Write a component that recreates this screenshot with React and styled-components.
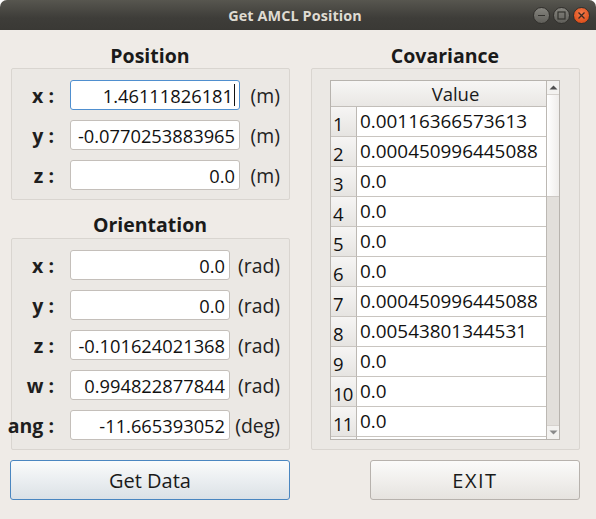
import React from 'react';
import styled, { createGlobalStyle } from 'styled-components';

const GlobalStyle = createGlobalStyle`
  html, body {
    margin: 0;
    padding: 0;
    background: #ffffff;
  }
  body {
    font-family: 'Open Sans', 'Noto Sans', sans-serif;
  }
`;

const Window = styled.div`
  width: 596px;
  height: 519px;
  display: flex;
  flex-direction: column;
  background: #efebe7;
  border-radius: 7px 7px 0 0;
  overflow: hidden;
`;

const TitleBar = styled.div`
  height: 30px;
  display: grid;
  grid-template-columns: 1fr auto 1fr;
  align-items: center;
  padding-right: 6px;
  background: linear-gradient(#57564f, #3e3d39 60%, #3a3935);
`;

const Title = styled.div`
  grid-column: 2;
  color: #dfdbd2;
  font-weight: 700;
  font-size: 14.4px;
  letter-spacing: 0.1px;
`;

const Controls = styled.div`
  justify-self: end;
  display: flex;
  gap: 3px;
`;

const WinButton = styled.div`
  width: 17px;
  height: 17px;
  border-radius: 50%;
  display: flex;
  align-items: center;
  justify-content: center;
  box-sizing: border-box;
  border: 1px solid #32312d;
  background: ${(p) =>
    p.$close
      ? 'radial-gradient(circle at 50% 35%, #f47b4c, #e0531f 70%)'
      : 'linear-gradient(#85847e, #5f5e59)'};
`;

const Body = styled.div`
  display: grid;
  grid-template-columns: 280px 270px;
  column-gap: 20px;
  padding-left: 10px;
`;

const Column = styled.div`
  display: flex;
  flex-direction: column;
`;

const Heading = styled.div`
  height: 38px;
  box-sizing: border-box;
  padding-top: ${(p) => p.$top || 12}px;
  text-align: center;
  font-weight: 700;
  font-size: 19.5px;
  line-height: 25px;
  color: #1a1a1a;
`;

const GroupBox = styled.div`
  margin-left: 1px;
  height: ${(p) => p.$height}px;
  box-sizing: border-box;
  border: 1px solid #d9d5d0;
  border-radius: 2px;
  background: #ebe8e4;
  padding: 11px 9px 9px 0;
  display: flex;
  flex-direction: column;
  gap: 10px;
`;

const FormRow = styled.div`
  display: flex;
  align-items: center;
  height: 30px;
`;

const Label = styled.div`
  width: 42px;
  flex-shrink: 0;
  display: flex;
  justify-content: flex-end;
  white-space: nowrap;
  font-weight: 700;
  font-size: 19.5px;
  color: #1e1e1e;
`;

const Field = styled.div`
  width: ${(p) => p.$width}px;
  height: 30px;
  margin-left: 16px;
  box-sizing: border-box;
  display: flex;
  align-items: center;
  justify-content: flex-end;
  padding-right: 4px;
  background: #ffffff;
  border: 1px solid ${(p) => (p.$focused ? '#4f8fcf' : '#c4bfba')};
  border-radius: 3px;
  font-size: 18.3px;
  color: #111111;
  white-space: nowrap;
  overflow: hidden;
`;

const Caret = styled.span`
  width: 1px;
  height: 22px;
  margin-left: 1px;
  background: #111111;
`;

const Unit = styled.div`
  flex: 1;
  text-align: right;
  font-size: 19.4px;
  color: #222222;
  white-space: nowrap;
`;

const CovBox = styled(GroupBox)`
  padding: 11px 0 9px 18px;
  display: block;
`;

const Table = styled.div`
  width: 230px;
  height: 360px;
  box-sizing: border-box;
  border: 1px solid #b7b3ae;
  display: flex;
  overflow: hidden;
  background: #ffffff;
`;

const TableMain = styled.div`
  width: 215px;
  display: grid;
  grid-template-columns: 26px 189px;
  grid-auto-rows: 30px;
  grid-template-rows: 26px;
  align-content: start;
`;

const HeaderCell = styled.div`
  box-sizing: border-box;
  border-bottom: 1px solid #c2beb9;
  background: linear-gradient(#f7f6f5, #e9e7e4);
  font-size: 18.5px;
  line-height: 25px;
  color: #1a1a1a;
  text-align: center;
  padding-left: ${(p) => (p.$corner ? 0 : 8)}px;
`;

const RowHead = styled.div`
  box-sizing: border-box;
  border-right: 1px solid #bcb8b3;
  border-bottom: 1px solid #c9c5c0;
  background: linear-gradient(#f6f5f4, #e6e4e1);
  font-size: 18.5px;
  line-height: 34px;
  padding-left: 2px;
  color: #111111;
  letter-spacing: -0.8px;
  white-space: nowrap;
  overflow: hidden;
`;

const Cell = styled.div`
  box-sizing: border-box;
  border-bottom: 1px solid #c9c5c0;
  font-size: 18.9px;
  line-height: 29px;
  padding-left: 3px;
  color: #111111;
  white-space: nowrap;
`;

const ScrollBar = styled.div`
  width: 13px;
  border-left: 1px solid #bcb8b3;
  display: flex;
  flex-direction: column;
  background: #e2dfdb;
`;

const ScrollArrow = styled.div`
  height: 13px;
  flex-shrink: 0;
  display: flex;
  align-items: center;
  justify-content: center;
  background: #f3f2f0;
  border-bottom: ${(p) => (p.$down ? 'none' : '1px solid #d6d2ce')};
  border-top: ${(p) => (p.$down ? '1px solid #d6d2ce' : 'none')};
  margin-top: ${(p) => (p.$down ? 'auto' : 0)};
`;

const Handle = styled.div`
  height: 102px;
  box-sizing: border-box;
  border-bottom: 1px solid #cdc9c5;
  background: linear-gradient(90deg, #ffffff, #efedeb);
`;

const ButtonRow = styled.div`
  margin-top: 10px;
  display: flex;
  justify-content: flex-end;
`;

const PushButton = styled.div`
  width: ${(p) => p.$width}px;
  height: 40px;
  box-sizing: border-box;
  border-radius: 3px;
  display: flex;
  align-items: center;
  justify-content: center;
  font-size: 20px;
  letter-spacing: ${(p) => p.$spacing || 0}px;
  color: #1a1a1a;
  border: 1px solid ${(p) => (p.$focused ? '#4a86c0' : '#b7b2ad')};
  background: ${(p) =>
    p.$focused
      ? 'linear-gradient(#fafbfb, #dbe1e6)'
      : 'linear-gradient(#fbfbfa, #e6e3df)'};
`;

const position = [
  { name: 'x :', value: '1.46111826181', unit: '(m)', focused: true },
  { name: 'y :', value: '-0.0770253883965', unit: '(m)' },
  { name: 'z :', value: '0.0', unit: '(m)' },
];

const orientation = [
  { name: 'x :', value: '0.0', unit: '(rad)' },
  { name: 'y :', value: '0.0', unit: '(rad)' },
  { name: 'z :', value: '-0.101624021368', unit: '(rad)' },
  { name: 'w :', value: '0.994822877844', unit: '(rad)' },
  { name: 'ang :', value: '-11.665393052', unit: '(deg)' },
];

const covariance = [
  '0.00116366573613',
  '0.000450996445088',
  '0.0',
  '0.0',
  '0.0',
  '0.0',
  '0.000450996445088',
  '0.00543801344531',
  '0.0',
  '0.0',
  '0.0',
  '0.0',
];

const FieldRow = ({ row, width }) => (
  <FormRow>
    <Label>{row.name}</Label>
    <Field $width={width} $focused={row.focused}>
      {row.value}
      {row.focused && <Caret />}
    </Field>
    <Unit>{row.unit}</Unit>
  </FormRow>
);

const App = () => (
  <>
    <GlobalStyle />
    <Window>
      <TitleBar>
        <Title>Get AMCL Position</Title>
        <Controls>
          <WinButton>
            <svg width="9" height="9" viewBox="0 0 9 9">
              <path d="M1 4.5h7" stroke="#33322e" strokeWidth="1.2" />
            </svg>
          </WinButton>
          <WinButton>
            <svg width="9" height="9" viewBox="0 0 9 9">
              <rect x="1" y="1" width="7" height="7" fill="none" stroke="#33322e" strokeWidth="1.2" />
            </svg>
          </WinButton>
          <WinButton $close>
            <svg width="9" height="9" viewBox="0 0 9 9">
              <path d="M1.5 1.5l6 6M7.5 1.5l-6 6" stroke="#3a2a22" strokeWidth="1.3" />
            </svg>
          </WinButton>
        </Controls>
      </TitleBar>
      <Body>
        <Column>
          <Heading $top={13}>Position</Heading>
          <GroupBox $height={132}>
            {position.map((row) => (
              <FieldRow key={row.name} row={row} width={170} />
            ))}
          </GroupBox>
          <Heading>Orientation</Heading>
          <GroupBox $height={212}>
            {orientation.map((row) => (
              <FieldRow key={row.name} row={row} width={160} />
            ))}
          </GroupBox>
          <ButtonRow>
            <PushButton $width={280} $focused>
              Get Data
            </PushButton>
          </ButtonRow>
        </Column>
        <Column>
          <Heading $top={13}>Covariance</Heading>
          <CovBox $height={382}>
            <Table>
              <TableMain>
                <HeaderCell $corner />
                <HeaderCell>Value</HeaderCell>
                {covariance.map((value, i) => (
                  <React.Fragment key={i}>
                    <RowHead>{i + 1}</RowHead>
                    <Cell>{value}</Cell>
                  </React.Fragment>
                ))}
              </TableMain>
              <ScrollBar>
                <ScrollArrow>
                  <svg width="9" height="5" viewBox="0 0 9 5">
                    <path d="M0.5 4.5L4.5 0.5L8.5 4.5Z" fill="#505050" />
                  </svg>
                </ScrollArrow>
                <Handle />
                <ScrollArrow $down>
                  <svg width="9" height="5" viewBox="0 0 9 5">
                    <path d="M0.5 0.5L4.5 4.5L8.5 0.5Z" fill="#8a8a8a" />
                  </svg>
                </ScrollArrow>
              </ScrollBar>
            </Table>
          </CovBox>
          <ButtonRow>
            <PushButton $width={210} $spacing={1.5}>
              EXIT
            </PushButton>
          </ButtonRow>
        </Column>
      </Body>
    </Window>
  </>
);

export default App;
